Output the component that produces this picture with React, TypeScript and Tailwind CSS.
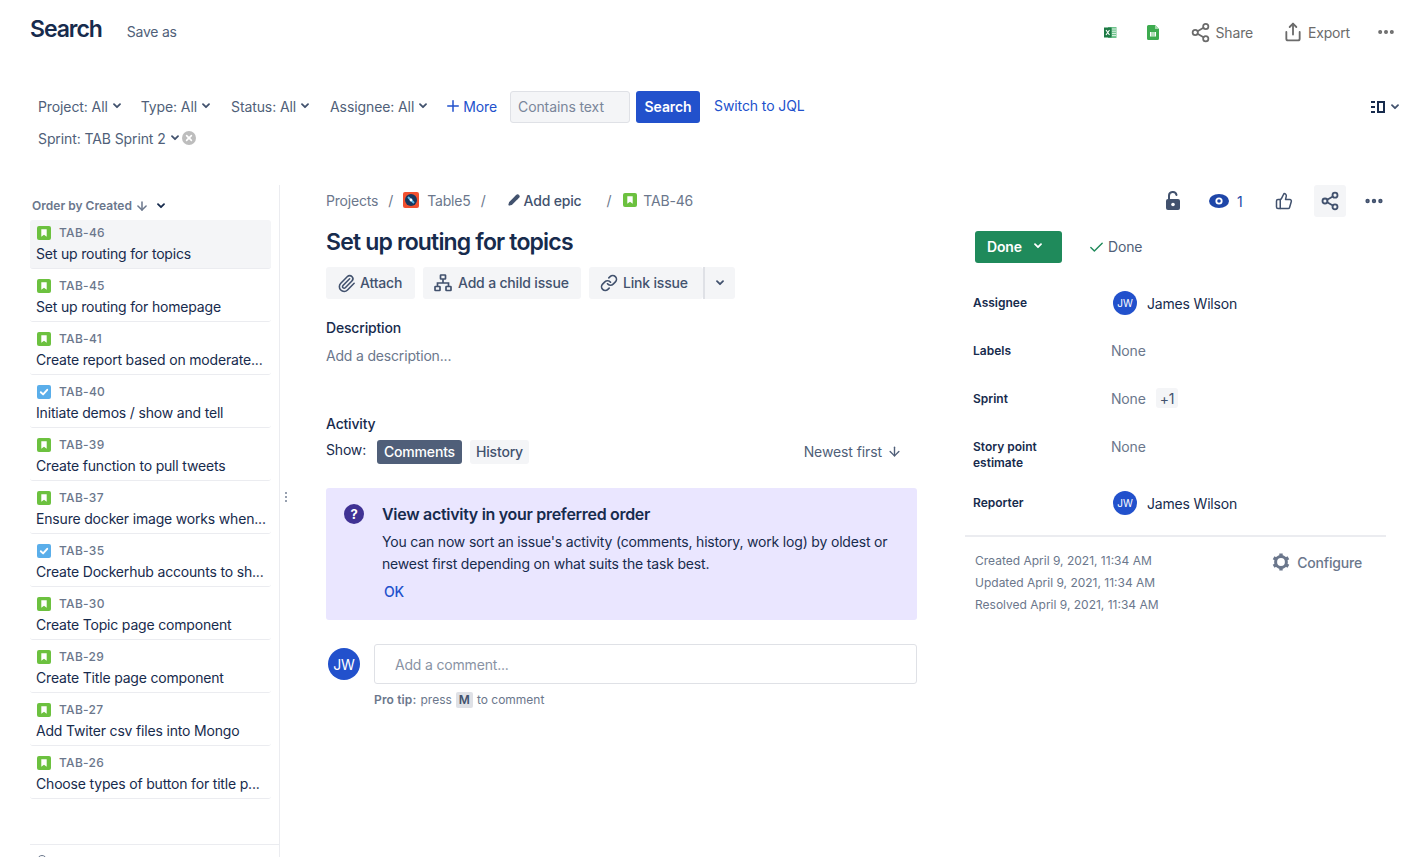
import { ArrowDown, Plus, Check, Paperclip, Link, ThumbsUp, MoreHorizontal, Share2, Share, Pencil } from "lucide-react";

type Issue = { id: string; title: string; kind: "story" | "task" };

const ISSUES: Issue[] = [
  { id: "TAB-46", title: "Set up routing for topics", kind: "story" },
  { id: "TAB-45", title: "Set up routing for homepage", kind: "story" },
  { id: "TAB-41", title: "Create report based on moderate...", kind: "story" },
  { id: "TAB-40", title: "Initiate demos / show and tell", kind: "task" },
  { id: "TAB-39", title: "Create function to pull tweets", kind: "story" },
  { id: "TAB-37", title: "Ensure docker image works when...", kind: "story" },
  { id: "TAB-35", title: "Create Dockerhub accounts to sh...", kind: "task" },
  { id: "TAB-30", title: "Create Topic page component", kind: "story" },
  { id: "TAB-29", title: "Create Title page component", kind: "story" },
  { id: "TAB-27", title: "Add Twiter csv files into Mongo", kind: "story" },
  { id: "TAB-26", title: "Choose types of button for title p...", kind: "story" },
];

function Chevron({ className = "text-[#42526e]" }: { className?: string }) {
  return (
    <svg width="8" height="6" viewBox="0 0 8 6" className={`shrink-0 ${className}`}>
      <path d="M1 1.2 L4 4.2 L7 1.2" fill="none" stroke="currentColor" strokeWidth="1.8" strokeLinecap="round" strokeLinejoin="round" />
    </svg>
  );
}

function StoryIcon() {
  return (
    <svg width="14" height="14" viewBox="0 0 14 14" className="shrink-0">
      <rect width="14" height="14" rx="2" fill="#6cc13f" />
      <path d="M4.3 3.2 H9.7 V10.8 L7 8.8 L4.3 10.8 Z" fill="#fff" />
    </svg>
  );
}

function TaskIcon() {
  return (
    <svg width="14" height="14" viewBox="0 0 14 14" className="shrink-0">
      <rect width="14" height="14" rx="2" fill="#5aaeea" />
      <path d="M3.8 7.2 L6.1 9.4 L10.2 4.8" fill="none" stroke="#fff" strokeWidth="1.9" strokeLinecap="round" strokeLinejoin="round" />
    </svg>
  );
}

function GearIcon() {
  return (
    <svg width="18" height="18" viewBox="0 0 18 18" className="shrink-0">
      <circle cx="9" cy="9" r="5.4" fill="none" stroke="#6b778c" strokeWidth="3" />
      <path d="M9 0.5 V3.5 M9 14.5 V17.5 M1.6 4.75 L4.2 6.25 M13.8 11.75 L16.4 13.25 M1.6 13.25 L4.2 11.75 M13.8 6.25 L16.4 4.75" stroke="#6b778c" strokeWidth="3.4" />
    </svg>
  );
}

function Filter({ label }: { label: string }) {
  return (
    <div className="flex items-center gap-[5px] pb-[2px] text-[14px] text-[#505f79]">
      <span>{label}</span>
      <Chevron />
    </div>
  );
}

function IssueRow({ issue, active }: { issue: Issue; active: boolean }) {
  return (
    <div className={`h-[49px] mb-[4px] rounded-[3px] border-b border-[#ebecf0] pl-[7px] pt-[6px] ${active ? "bg-[#f4f5f7]" : "bg-white"}`}>
      <div className="flex items-center gap-[8px] h-[14px]">
        {issue.kind === "story" ? <StoryIcon /> : <TaskIcon />}
        <span className="text-[12px] font-medium tracking-[0.3px] text-[#6b778c]">{issue.id}</span>
      </div>
      <div className="-ml-[1px] mt-[3px] text-[14px] leading-[22px] text-[#172b4d] whitespace-nowrap">{issue.title}</div>
    </div>
  );
}

function Avatar({ size }: { size: "sm" | "lg" }) {
  return size === "sm" ? (
    <div className="w-[24px] h-[24px] rounded-full bg-[#2251cc] text-white text-[10px] tracking-normal flex items-center justify-center shrink-0">JW</div>
  ) : (
    <div className="w-[32px] h-[32px] rounded-full bg-[#2251cc] text-white text-[14px] flex items-center justify-center shrink-0">JW</div>
  );
}

function ActionButton({ icon, label, className }: { icon: React.ReactNode; label: string; className: string }) {
  return (
    <div className={`h-[32px] rounded-[3px] bg-[#f4f5f7] flex items-center pl-[11px] text-[14px] font-medium text-[#42526e] ${className}`}>
      {icon}
      <span className="pb-[2px] whitespace-nowrap">{label}</span>
    </div>
  );
}

function DetailRow({ label, className, children }: { label: React.ReactNode; className: string; children: React.ReactNode }) {
  return (
    <div className={`flex ${className}`}>
      <div className="w-[138px] shrink-0 text-[12px] leading-[16px] font-semibold tracking-normal text-[#172b4d]">{label}</div>
      <div>{children}</div>
    </div>
  );
}

export default function App() {
  return (
    <div className="h-[857px] overflow-hidden bg-white tracking-[-0.18px] font-['Inter','Liberation_Sans',sans-serif]">
      {/* header */}
      <div className="h-[91px] flex items-start pl-[30px] pr-[10px] pt-[14px]">
        <h1 className="text-[23px] leading-[30px] font-semibold tracking-[-1.05px] text-[#172b4d]">Search</h1>
        <span className="ml-[25px] mt-[9px] text-[14px] leading-[18px] tracking-[-0.25px] text-[#505f79]">Save as</span>
        <div className="ml-auto flex items-center text-[14px] text-[#6b6b6b] h-[36px]">
          <svg width="13" height="13" viewBox="0 0 13 13" className="mr-[30px]">
            <rect x="4" y="1" width="8.5" height="11" fill="#6cc28a" />
            <path d="M8 3 h4 M8 5.2 h4 M8 7.4 h4 M8 9.6 h4" stroke="#fff" strokeWidth="0.8" />
            <rect y="1.5" width="7.5" height="10" fill="#1d7a45" />
            <path d="M2 4 L5.5 9 M5.5 4 L2 9" stroke="#fff" strokeWidth="1.1" />
          </svg>
          <svg width="12" height="15" viewBox="0 0 12 15" className="mr-[31px]">
            <path d="M1.5 0 H8 L12 4 V13.5 A1.5 1.5 0 0 1 10.5 15 H1.5 A1.5 1.5 0 0 1 0 13.5 V1.5 A1.5 1.5 0 0 1 1.5 0 Z" fill="#3dab4f" />
            <path d="M8 0 L12 4 H8 Z" fill="#a5d9ae" />
            <rect x="3" y="7" width="6" height="4.5" fill="#fff" />
            <path d="M5 7 v4.5 M7 7 v4.5" stroke="#3dab4f" strokeWidth="0.8" />
          </svg>
          <Share2 size={21} strokeWidth={2} className="mr-[5px] text-[#6b6b6b]" />
          <span className="mr-[30px]">Share</span>
          <Share size={20} strokeWidth={2.2} className="mr-[5px] text-[#6b6b6b]" />
          <span className="mr-[26px]">Export</span>
          <MoreHorizontal size={20} strokeWidth={2.8} className="text-[#6b6b6b]" />
        </div>
      </div>

      {/* filters */}
      <div className="h-[94px] flex items-start pl-[38px] pr-[7px]">
        <div className="tracking-[-0.1px]">
          <div className="h-[32px] flex items-center">
            <div className="mr-[20px]"><Filter label="Project: All" /></div>
            <div className="mr-[21px]"><Filter label="Type: All" /></div>
            <div className="mr-[21px]"><Filter label="Status: All" /></div>
            <div className="mr-[19px]"><Filter label="Assignee: All" /></div>
            <div className="flex items-center pb-[2px] text-[14px] text-[#2251cc] mr-[13px]">
              <Plus size={18} strokeWidth={2} className="mr-[1px] -ml-[2px]" />
              More
            </div>
            <div className="w-[120px] h-[32px] rounded-[3px] border border-[#dfe1e6] bg-[#f4f5f7] flex items-center pl-[7px] pb-[2px] text-[14px] text-[#7a869a] mr-[6px]">Contains text</div>
            <div className="h-[32px] w-[64px] pb-[2px] rounded-[3px] bg-[#2251cc] flex items-center justify-center text-[14px] font-semibold text-white mr-[14px]">Search</div>
            <span className="text-[14px] text-[#2251cc] -mt-[3px]">Switch to JQL</span>
          </div>
          <div className="h-[32px] -mt-[1px] flex items-center text-[14px] text-[#505f79]">
            <span className="mr-[5px]">Sprint: TAB Sprint 2</span>
            <Chevron />
            <svg width="14" height="14" viewBox="0 0 14 14" className="ml-[3px]">
              <circle cx="7" cy="7" r="7" fill="#bdbdbd" />
              <path d="M4.6 4.6 L9.4 9.4 M9.4 4.6 L4.6 9.4" stroke="#fff" strokeWidth="1.6" strokeLinecap="round" />
            </svg>
          </div>
        </div>
        <div className="ml-auto h-[32px] flex items-center gap-[6px]">
          <svg width="14" height="12" viewBox="0 0 14 12">
            <path d="M0 1 h4 M0 6 h4 M0 11 h4" stroke="#172b4d" strokeWidth="2" />
            <rect x="7" y="1" width="6" height="10" fill="none" stroke="#172b4d" strokeWidth="2" />
          </svg>
          <Chevron />
        </div>
      </div>

      <div className="flex items-stretch h-[672px]">
        {/* issue list */}
        <aside className="w-[280px] shrink-0 border-r border-[#ebecf0] pl-[30px] flex flex-col">
          <div className="h-[35px] flex items-center pl-[2px] pt-[6px] text-[12px] font-semibold tracking-[0.02px] text-[#6b778c]">
            Order by Created
            <ArrowDown size={14} strokeWidth={2.6} className="ml-[3px] mr-[8px] text-[#6b778c]" />
            <Chevron className="text-[#172b4d]" />
          </div>
          <div className="w-[241px]">
            {ISSUES.map((issue, i) => (
              <IssueRow key={issue.id} issue={issue} active={i === 0} />
            ))}
          </div>
          <div className="mt-auto border-t border-[#ebecf0] h-[13px] pt-[10px] pl-[7px]">
            <div className="w-[10px] h-[10px] rounded-full border border-[#6b778c]" />
          </div>
        </aside>

        {/* resize handle + main */}
        <main className="relative flex-1 flex pl-[46px]">
          <div className="absolute left-[5px] top-[307px] flex flex-col gap-[2px]">
            <span className="w-[2px] h-[2px] bg-[#97a0af]" />
            <span className="w-[2px] h-[2px] bg-[#97a0af]" />
            <span className="w-[2px] h-[2px] bg-[#97a0af]" />
          </div>

          <div className="w-[591px] shrink-0">
            <div className="h-[32px] -mt-[1px] flex items-center text-[14px] text-[#6b778c]">
              <span>Projects</span>
              <span className="ml-[10px] mr-[10px]">/</span>
              <svg width="16" height="16" viewBox="0 0 16 16" className="mr-[8px]">
                <rect width="16" height="16" rx="2" fill="#f1502f" />
                <circle cx="8" cy="8" r="6" fill="#17375e" />
                <path d="M5 5 L11 11" stroke="#5fb9e8" strokeWidth="2" />
                <circle cx="8" cy="8" r="1.4" fill="#fff" />
              </svg>
              <span>Table5</span>
              <span className="ml-[10px]">/</span>
              <Pencil size={12} strokeWidth={2.5} fill="#42526e" className="ml-[22px] mr-[4px] text-[#42526e]" />
              <span className="font-medium text-[#42526e]">Add epic</span>
              <span className="ml-[25px] mr-[12px]">/</span>
              <StoryIcon />
              <span className="ml-[6px]">TAB-46</span>
            </div>
            <h2 className="mt-[10px] text-[23px] leading-[32px] font-semibold tracking-[-0.83px] text-[#172b4d]">Set up routing for topics</h2>
            <div className="mt-[9px] flex items-center gap-[8px]">
              <ActionButton className="w-[89px]" icon={<Paperclip size={19} strokeWidth={2} className="mr-[4px]" />} label="Attach" />
              <ActionButton
                className="w-[158px]"
                icon={
                  <svg width="18" height="18" viewBox="0 0 18 18" fill="none" stroke="#42526e" strokeWidth="1.7" className="mr-[6px]">
                    <rect x="6.5" y="1" width="5" height="4" rx="0.5" />
                    <rect x="1" y="12.5" width="5" height="4" rx="0.5" />
                    <rect x="12" y="12.5" width="5" height="4" rx="0.5" />
                    <path d="M9 5 V9 M3.5 12.5 V9 H14.5 V12.5" />
                  </svg>
                }
                label="Add a child issue"
              />
              <div className="flex">
                <ActionButton className="w-[114px]" icon={<Link size={18} strokeWidth={2.2} className="mr-[5px]" />} label="Link issue" />
                <div className="h-[32px] w-[32px] rounded-r-[3px] border-l-2 border-[#dfe1e6] bg-[#f4f5f7] flex items-center justify-center">
                  <Chevron />
                </div>
              </div>
            </div>

            <div className="mt-[19px] text-[14px] leading-[20px] font-medium text-[#172b4d]">Description</div>
            <div className="mt-[8px] text-[14px] leading-[20px] text-[#6b778c]">Add a description...</div>

            <div className="mt-[48px] text-[14px] leading-[20px] font-medium text-[#172b4d]">Activity</div>
            <div className="mt-[6px] flex items-center h-[24px] text-[14px]">
              <span className="text-[#172b4d] -mt-[5px]">Show:</span>
              <span className="ml-[11px] h-[24px] px-[7px] pb-[2px] rounded-[3px] bg-[#505f79] text-white font-medium flex items-center">Comments</span>
              <span className="ml-[8px] h-[24px] px-[6px] pb-[2px] rounded-[3px] bg-[#f4f5f7] text-[#42526e] font-medium flex items-center">History</span>
              <span className="ml-auto flex items-center pr-[15px] pb-[2px] tracking-[-0.1px] text-[#505f79]">
                Newest first
                <ArrowDown size={15} strokeWidth={2.2} className="ml-[5px]" />
              </span>
            </div>

            <div className="mt-[24px] h-[132px] rounded-[3px] bg-[#eae6ff] pl-[17px] pt-[15px] flex">
              <svg width="22" height="22" viewBox="0 0 22 22" className="shrink-0">
                <circle cx="11" cy="11" r="10" fill="#403294" />
                <text x="11" y="15.5" textAnchor="middle" fontSize="13" fontWeight="700" fill="#fff" fontFamily="Inter">?</text>
              </svg>
              <div className="ml-[17px]">
                <div className="text-[16px] leading-[22px] font-semibold tracking-[-0.3px] text-[#172b4d]">View activity in your preferred order</div>
                <p className="mt-[6px] w-[520px] text-[14px] leading-[22px] text-[#172b4d]">
                  You can now sort an issue's activity (comments, history, work log) by oldest or newest first depending on what suits the task best.
                </p>
                <div className="mt-[7px] ml-[2px] text-[14px] leading-[20px] font-medium text-[#2251cc]">OK</div>
              </div>
            </div>

            <div className="mt-[24px] flex">
              <div className="ml-[2px] mt-[4px]"><Avatar size="lg" /></div>
              <div className="ml-[14px] flex-1">
                <div className="h-[40px] rounded-[3px] border border-[#dfe1e6] flex items-center pl-[20px] text-[14px] text-[#8993a4]">Add a comment...</div>
                <div className="mt-[7px] h-[18px] flex items-center text-[12px] tracking-normal text-[#6b778c]">
                  <span className="font-semibold tracking-[0.15px]">Pro tip:</span>
                  <span className="ml-[4px]">press</span>
                  <span className="ml-[4px] px-[3px] h-[16px] rounded-[2px] bg-[#dfe1e6] text-[#42526e] font-semibold flex items-center">M</span>
                  <span className="ml-[4px]">to comment</span>
                </div>
              </div>
            </div>
          </div>

          {/* details */}
          <div className="ml-[48px] w-[421px] shrink-0">
            <div className="h-[32px] flex items-center text-[#42526e]">
              <svg width="16" height="20" viewBox="0 0 16 20" className="ml-[200px] mr-[28px]">
                <path d="M4 9 V5 A3.8 3.8 0 0 1 11.5 4" fill="none" stroke="#42526e" strokeWidth="2" strokeLinecap="round" />
                <rect x="1" y="8" width="14" height="11" rx="2" fill="#42526e" />
                <circle cx="8" cy="13.5" r="1.8" fill="#fff" />
              </svg>
              <svg width="20" height="14" viewBox="0 0 20 14">
                <ellipse cx="10" cy="7" rx="10" ry="7" fill="#1e46a8" />
                <circle cx="10" cy="7" r="3.6" fill="#fff" />
                <circle cx="10" cy="7" r="1.8" fill="#1e46a8" />
              </svg>
              <span className="ml-[8px] mr-[32px] text-[14px] text-[#1e46a8]">1</span>
              <ThumbsUp size={18} strokeWidth={2} className="mr-[21px]" />
              <div className="w-[32px] h-[32px] rounded-[3px] bg-[#f4f5f7] flex items-center justify-center mr-[17px]">
                <Share2 size={20} strokeWidth={2.2} />
              </div>
              <MoreHorizontal size={22} strokeWidth={2.8} />
            </div>

            <div className="mt-[14px] flex items-center h-[32px] pl-[10px]">
              <div className="w-[87px] h-[32px] rounded-[3px] bg-[#1f8a5b] flex items-center pl-[12px] pb-[2px] text-[14px] font-semibold text-white">
                Done
                <Chevron className="ml-[12px] text-white" />
              </div>
              <Check size={17} strokeWidth={2} className="ml-[26px] text-[#1f8a5b]" />
              <span className="ml-[3px] pb-[2px] text-[14px] text-[#505f79]">Done</span>
            </div>

            <div className="mt-[32px] pl-[8px]">
              <DetailRow label="Assignee" className="h-[48px]">
                <div className="flex items-center gap-[10px] -mt-[4px] ml-[2px] text-[14px] text-[#172b4d]">
                  <Avatar size="sm" />
                  James Wilson
                </div>
              </DetailRow>
              <DetailRow label="Labels" className="h-[48px]">
                <div className="-mt-[2px] text-[14px] leading-[20px] text-[#6b778c]">None</div>
              </DetailRow>
              <DetailRow label="Sprint" className="h-[48px]">
                <div className="flex items-center -mt-[3px] h-[20px] text-[14px] text-[#6b778c]">
                  None
                  <span className="ml-[10px] h-[20px] px-[4px] rounded-[3px] bg-[#f4f5f7] text-[#42526e] flex items-center">+1</span>
                </div>
              </DetailRow>
              <DetailRow label={<>Story point<br />estimate</>} className="h-[56px]">
                <div className="-mt-[2px] text-[14px] leading-[20px] text-[#6b778c]">None</div>
              </DetailRow>
              <DetailRow label="Reporter" className="h-[40px]">
                <div className="flex items-center gap-[10px] -mt-[4px] ml-[2px] text-[14px] text-[#172b4d]">
                  <Avatar size="sm" />
                  James Wilson
                </div>
              </DetailRow>
            </div>

            <div className="border-t-2 border-[#ebecf0] pt-[13px] pl-[10px] flex">
              <div className="text-[12px] leading-[22px] tracking-normal text-[#6b778c]">
                <div>Created April 9, 2021, 11:34 AM</div>
                <div>Updated April 9, 2021, 11:34 AM</div>
                <div>Resolved April 9, 2021, 11:34 AM</div>
              </div>
              <div className="ml-auto mr-[24px] mt-[3px] h-[18px] flex items-center gap-[7px] text-[14px] font-medium text-[#6b778c]">
                <GearIcon />
                Configure
              </div>
            </div>
          </div>
        </main>
      </div>
    </div>
  );
}
